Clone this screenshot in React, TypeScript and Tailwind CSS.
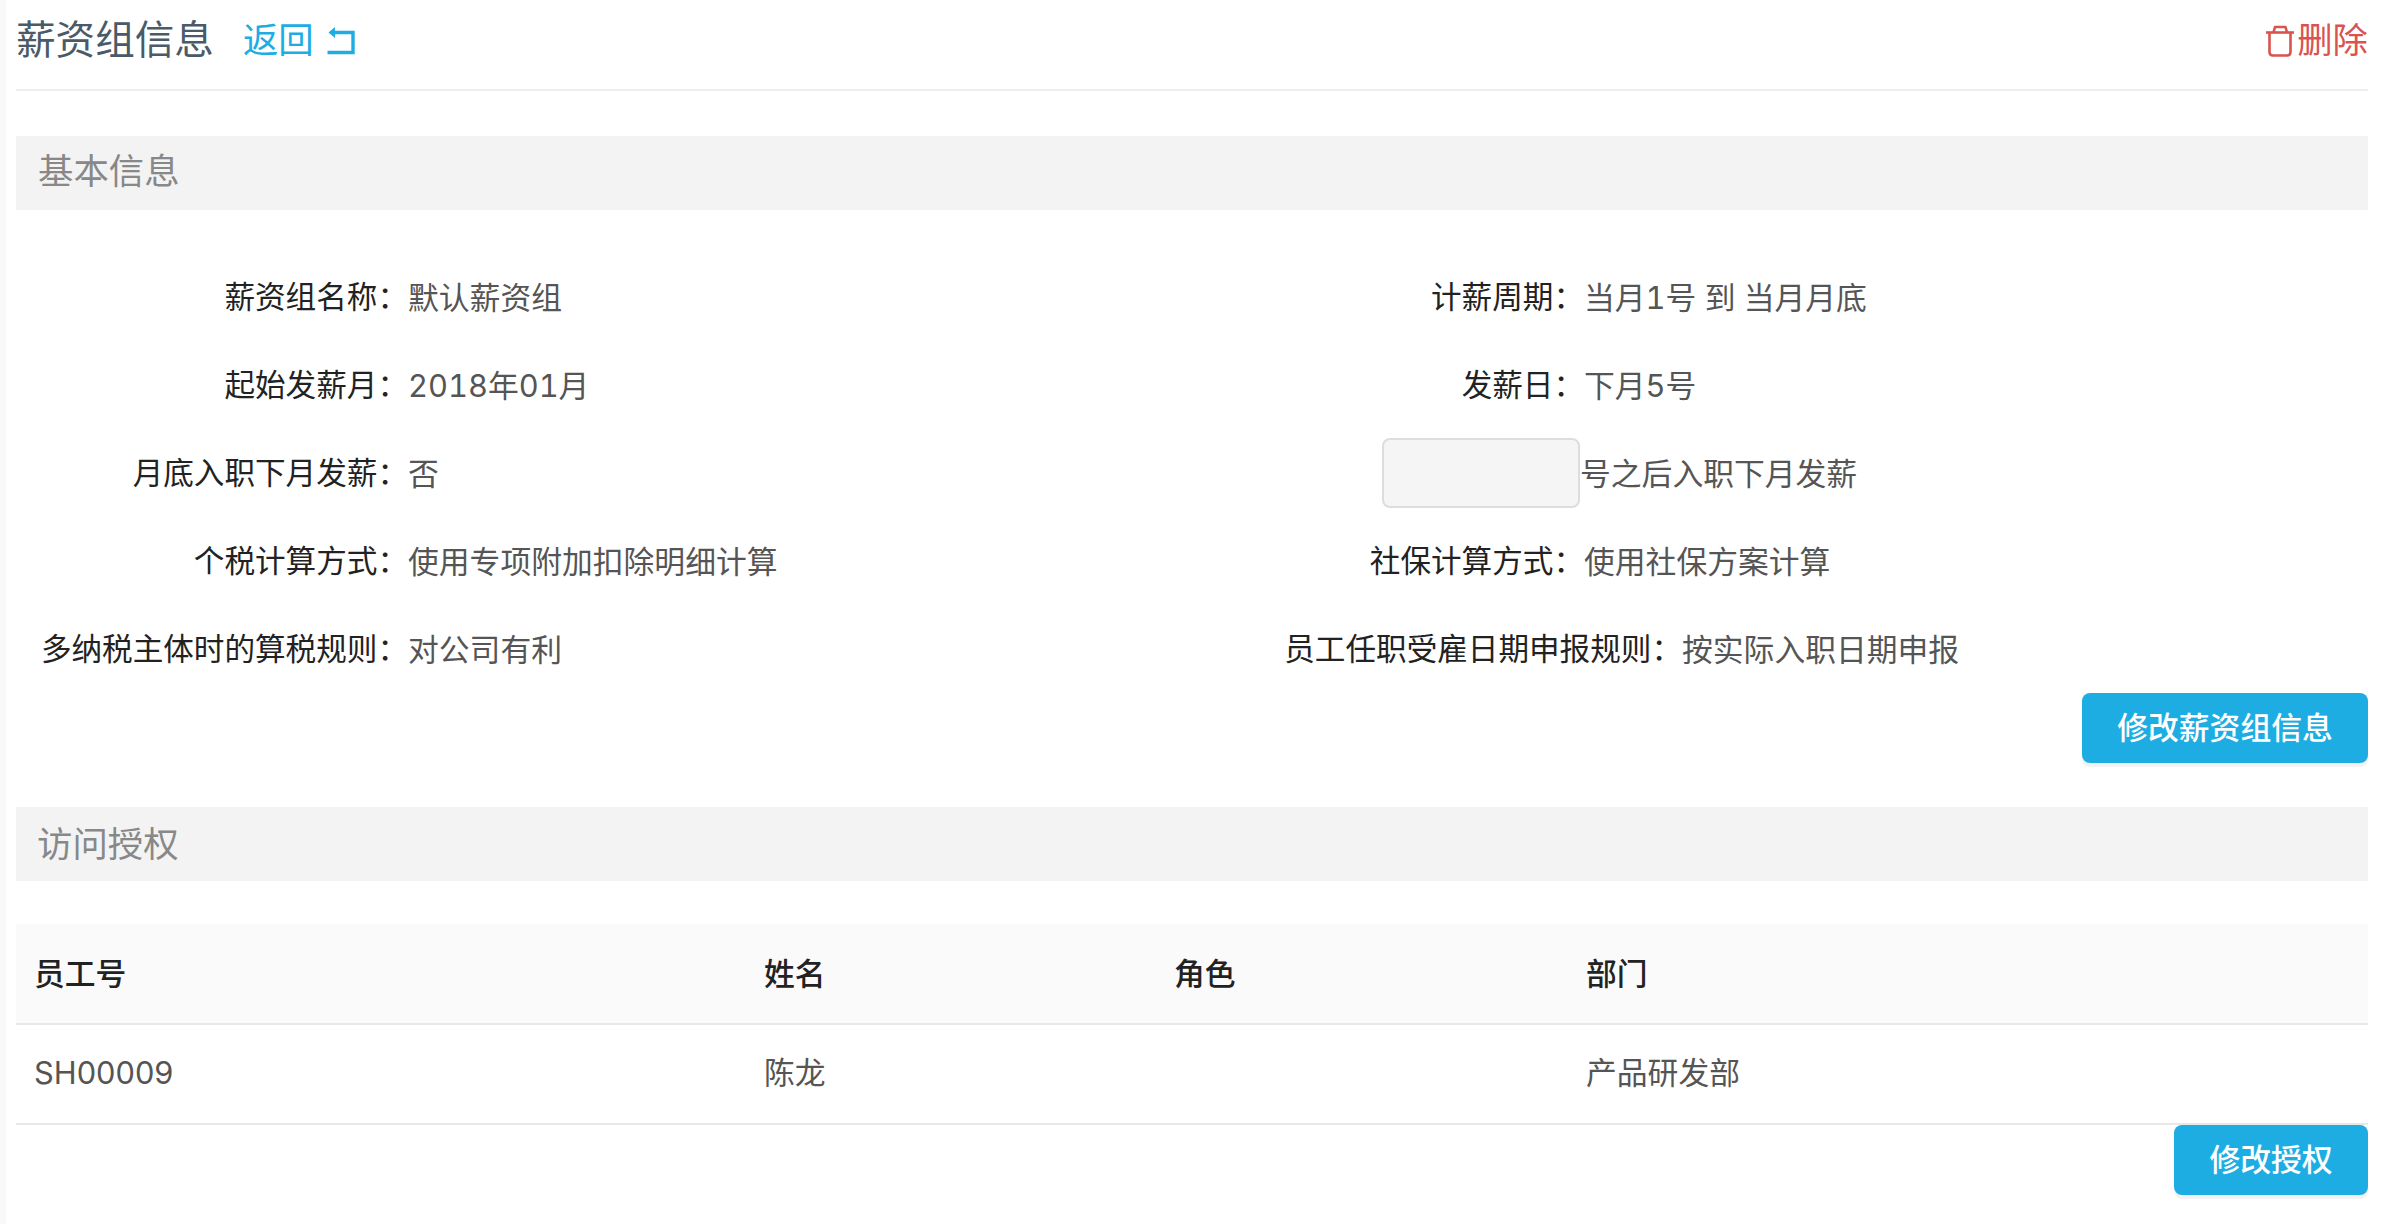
const font = { fontFamily: 'Inter,"Noto Sans CJK SC",sans-serif' };

function Row({ left, right }: { left: [string, string]; right: React.ReactNode }) {
  return (
    <div className="flex h-[88px] items-center">
      <div className="flex w-[1176px] items-center">
        <span className="w-[392px] shrink-0 text-right text-[30.6px] text-[#222]">{left[0]}：</span>
        <span className="pt-[2px] text-[#555] tabular-nums">{left[1]}</span>
      </div>
      <div className="flex items-center">{right}</div>
    </div>
  );
}

function Pair({ label, value, w = "w-[392px]" }: { label: string; value: string; w?: string }) {
  return (
    <>
      <span className={`${w} shrink-0 text-right text-[30.6px] text-[#222]`}>{label}：</span>
      <span className="pt-[2px] text-[#555] tabular-nums">{value}</span>
    </>
  );
}

function Btn({ children, w }: { children: string; w: string }) {
  return (
    <button className={`${w} h-[70px] rounded-[8px] bg-[#1eade3] text-[30.8px] font-medium text-white shadow-[0_4px_0_#f3f3f3]`}>
      {children}
    </button>
  );
}

export default function App() {
  return (
    <div className="flex min-h-[1224px] bg-white text-[30.8px] leading-none" style={font}>
      <div className="w-[6px] shrink-0 bg-[#f9f9f9]" />
      <div className="w-[2362px] pl-[10px]">
        <div className="flex h-[91px] items-center justify-between border-b-2 border-[#eeeeee] pb-[8px]">
          <div className="flex items-center">
            <span className="text-[39.6px] text-[#4a5a68]">薪资组信息</span>
            <span className="ml-[29px] text-[35.4px] text-[#1eade3]">返回</span>
            <svg className="ml-[13px]" width="28" height="29" viewBox="0 0 28 29" fill="none">
              <path d="M7 6.5H26V26.5H0.5" stroke="#1eade3" strokeWidth="3.4" />
              <path d="M1.5 6.5L8 1V12Z" fill="#1eade3" />
            </svg>
          </div>
          <div className="flex items-center text-[35.4px] text-[#d9534f]">
            <svg width="30" height="32" viewBox="0 0 30 32" fill="none" stroke="#d9534f" strokeWidth="2.6" strokeLinejoin="round">
              <path d="M1 7.5H29" />
              <path d="M8.5 7.5L10 2H20.5L22 7.5" />
              <path d="M4.5 7.5V27Q4.5 30.5 8 30.5H22Q25.5 30.5 25.5 27V7.5" />
            </svg>
            <span className="ml-[2px]">删除</span>
          </div>
        </div>

        <div className="mt-[45px] flex h-[74px] items-center bg-[#f3f3f3] pb-[2px] pl-[22px] text-[35.4px] text-[#888]">
          基本信息
        </div>

        <div className="mt-[43px]">
          <Row left={["薪资组名称", "默认薪资组"]} right={<Pair label="计薪周期" value="当月1号 到 当月月底" />} />
          <Row left={["起始发薪月", "2018年01月"]} right={<Pair label="发薪日" value="下月5号" />} />
          <Row
            left={["月底入职下月发薪", "否"]}
            right={
              <>
                <div className="flex w-[388px] justify-end">
                  <div className="h-[70px] w-[198px] rounded-[8px] border-2 border-[#dddddd] bg-[#f5f5f5]" />
                </div>
                <span className="pt-[2px] text-[#555]">号之后入职下月发薪</span>
              </>
            }
          />
          <Row left={["个税计算方式", "使用专项附加扣除明细计算"]} right={<Pair label="社保计算方式" value="使用社保方案计算" />} />
          <Row
            left={["多纳税主体时的算税规则", "对公司有利"]}
            right={<Pair label="员工任职受雇日期申报规则" value="按实际入职日期申报" w="w-[490px]" />}
          />
        </div>

        <div className="flex justify-end">
          <Btn w="w-[286px]">修改薪资组信息</Btn>
        </div>

        <div className="mt-[44px] flex h-[74px] items-center bg-[#f3f3f3] pl-[21px] pt-[2px] text-[35.4px] text-[#888]">
          访问授权
        </div>

        <table className="mt-[43px] w-full table-fixed border-collapse text-left">
          <thead>
            <tr className="h-[100px] border-b-2 border-[#e8e8e8] bg-[#fafafa] text-[#222]">
              <th className="w-[730px] pl-[18px] pt-[2px] font-medium">员工号</th>
              <th className="w-[410px] pl-[18px] pt-[2px] font-medium">姓名</th>
              <th className="w-[412px] pl-[18px] pt-[2px] font-medium">角色</th>
              <th className="pl-[18px] pt-[2px] font-medium">部门</th>
            </tr>
          </thead>
          <tbody>
            <tr className="h-[100px] border-b-2 border-[#e8e8e8] text-[#555]">
              <td className="pb-[2px] pl-[18px]">SH00009</td>
              <td className="pb-[2px] pl-[18px]">陈龙</td>
              <td className="pb-[2px] pl-[18px]"></td>
              <td className="pb-[2px] pl-[18px]">产品研发部</td>
            </tr>
          </tbody>
        </table>

        <div className="flex justify-end">
          <Btn w="w-[194px]">修改授权</Btn>
        </div>
      </div>
    </div>
  );
}
